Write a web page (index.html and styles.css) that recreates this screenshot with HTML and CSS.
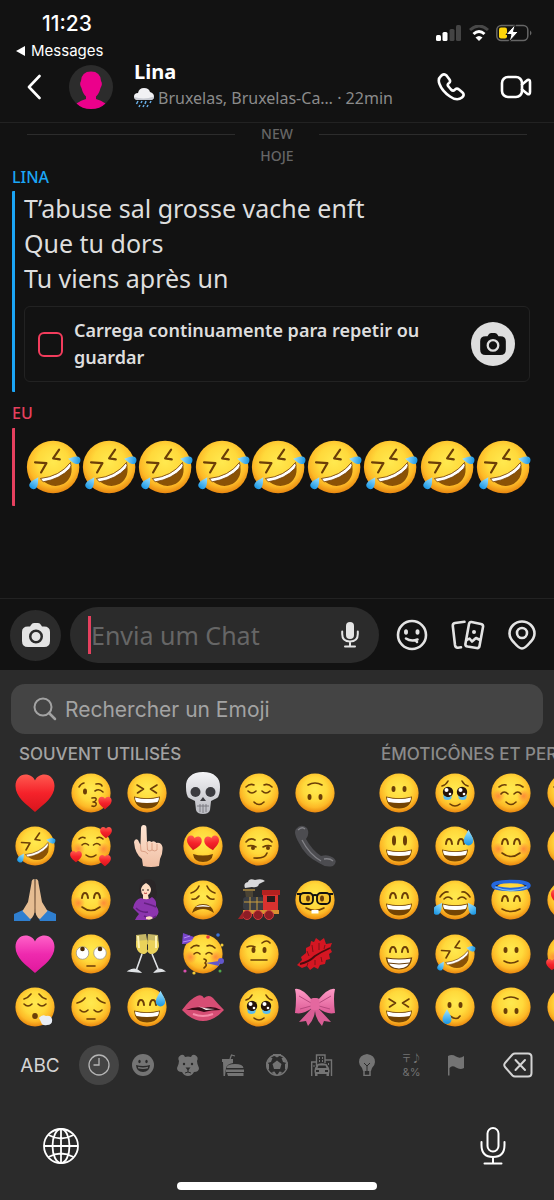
FILE: index.html
```
<!DOCTYPE html><html lang="pt"><head><meta charset="utf-8"><meta name="viewport" content="width=device-width"><link rel="icon" href="data:">
<title>Lina</title>
<link rel="stylesheet" href="styles.css">
</head>
<body>

<svg class="sprite" aria-hidden="true">
<defs>
  <radialGradient id="gface" cx=".5" cy=".4" r=".6"><stop offset="0" stop-color="#ffe94f"/><stop offset=".5" stop-color="#ffd93b"/><stop offset=".78" stop-color="#fdb927"/><stop offset="1" stop-color="#e8860f"/></radialGradient>
  <linearGradient id="gred" x2="0" y2="1"><stop offset="0" stop-color="#ff5a50"/><stop offset=".5" stop-color="#f5222a"/><stop offset="1" stop-color="#d8141c"/></linearGradient>
  <linearGradient id="gpink" x2="0" y2="1"><stop offset="0" stop-color="#ff62c8"/><stop offset=".5" stop-color="#ee2aae"/><stop offset="1" stop-color="#e0189c"/></linearGradient>
  <linearGradient id="gtear" x2="0" y2="1"><stop offset="0" stop-color="#a5e6ff"/><stop offset="1" stop-color="#1795e4"/></linearGradient>
  <linearGradient id="gskull" x2="0" y2="1"><stop offset="0" stop-color="#f4f4f6"/><stop offset="1" stop-color="#b9bac0"/></linearGradient>
  <linearGradient id="gskin" x2="0" y2="1"><stop offset="0" stop-color="#ffe6d4"/><stop offset="1" stop-color="#f0bfa4"/></linearGradient>
  <linearGradient id="gbow" x2="0" y2="1"><stop offset="0" stop-color="#ff9ac6"/><stop offset="1" stop-color="#dc5a95"/></linearGradient>
  <radialGradient id="gcheek"><stop offset="0" stop-color="#ff6a3a" stop-opacity=".65"/><stop offset="1" stop-color="#ff6a3a" stop-opacity="0"/></radialGradient>

  <circle id="p-face" r="19.6" fill="url(#gface)"/>
  <path id="p-heart" d="M0 19C-9 11-19.500 4-19.500-7C-19.500-14-15-18.500-9.500-18.500C-5-18.500-1.500-16 0-12.500C1.500-16 5-18.500 9.500-18.500C15-18.500 19.500-14 19.500-7C19.500 4 9 11 0 19Z"/>
  <path id="p-tear" d="M0-7C2-3 4.500 0 4.500 3.500A4.500 4.500 0 0 1-4.500 3.500C-4.500 0-2-3 0-7Z" fill="url(#gtear)"/>
  <g id="p-mouth"><path d="M-13 3.500Q0 7 13 3.500Q12 15.500 0 15.500Q-12 15.500-13 3.500Z" fill="#734404"/><path d="M-12 4.500Q0 7.500 12 4.500Q12 8 10.500 9Q0 11-10.500 9Q-12 8-12 4.500Z" fill="#fff"/></g>
  <g id="p-arcs" class="ln thick"><path d="M-9-2Q-8.500-7-6-7T-3-2M3-2Q3.500-7 6-7T9-2"/></g>
  <g id="p-dots" fill="#6b3e07"><ellipse cx="-5.500" cy="-4" rx="2" ry="3"/><ellipse cx="5.500" cy="-4" rx="2" ry="3"/></g>
  <g id="p-cheeks"><circle cx="-12.500" cy="3" r="6.500" fill="url(#gcheek)"/><circle cx="12.500" cy="3" r="6.500" fill="url(#gcheek)"/></g>
  <g id="p-closed" class="ln"><path d="M-11-1Q-7 3-3-1M3-1Q7 3 11-1"/></g>
  <g id="p-puppy"><g fill="#23130a"><circle cx="-7" cy="-1" r="5.200"/><circle cx="7" cy="-1" r="5.200"/></g><g fill="#fff"><circle cx="-8.500" cy="-3" r="2"/><circle cx="5.500" cy="-3" r="2"/><circle cx="-5" cy="1" r="1.300"/><circle cx="9" cy="1" r="1.300"/></g><path d="M-12 2Q-7 6-3 2.500L-4 6Q-8 8-11 6ZM12 2Q7 6 3 2.500L4 6Q8 8 11 6Z" fill="#5bbcf0"/></g>
</defs>

<symbol id="heart" viewBox="-21 -21 42 42"><use href="#p-heart" fill="url(#gred)"/></symbol>
<symbol id="pinkheart" viewBox="-21 -21 42 42"><use href="#p-heart" fill="url(#gpink)"/></symbol>
<symbol id="kiss" viewBox="-21 -21 42 42"><use href="#p-face"/><ellipse cx="-6" cy="-1.500" rx="2" ry="3" fill="#6b3e07"/><path class="ln" d="M-12-6Q-10-9.500-7-10M5-9Q10-10 11-7M4-2Q8-5 12-1M1 5Q6 4 5 7Q4 9 2 9Q6 9 5 12Q4 14 1 13"/><use href="#p-heart" fill="url(#gred)" transform="translate(14 10) scale(.34)"/></symbol>
<symbol id="laugh" viewBox="-21 -21 42 42"><use href="#p-face"/><path class="ln" d="M-10-8L-3.500-4L-9.500 0M10-8L3.500-4L9.500 0"/><use href="#p-mouth"/></symbol>
<symbol id="rofl" viewBox="-21 -21 42 42"><use href="#p-face"/><path class="ln" d="M4.500-13L0-6.500L5-5.800M-13.500-3.500L-5-3L-9 4"/><path d="M-9.500 8.500Q5 7 13-3.500Q16 7 8 12.500Q-1 17-9.500 8.500Z" fill="#8a5206"/><path d="M-9.500 8.500Q5 7 13-3.500Q14-1 12.500 1Q5 9-7.500 11Z" fill="#fff" stroke="#754207" stroke-width=".6"/><use href="#p-tear" transform="translate(15.500 -5.500) rotate(-80) scale(.62)"/><use href="#p-tear" transform="translate(-13.500 11.500) rotate(32) scale(.66)"/></symbol>
<symbol id="loved" viewBox="-21 -21 42 42"><use href="#p-face"/><use href="#p-cheeks"/><path class="ln" d="M-9-1Q-6-4-2.500-1M2.500-1Q6-4 9-1M-12-7Q-9-10-6-8M6-8Q9-10 12-7M-5 9Q0 13 5 9"/><g fill="url(#gred)"><use href="#p-heart" transform="translate(15 -13.500) scale(.3)"/><use href="#p-heart" transform="translate(-15 10.500) scale(.3)"/><use href="#p-heart" transform="translate(14 14.500) scale(.3)"/></g></symbol>
<symbol id="finger" viewBox="-21 -21 42 42"><path d="M-6-17.500Q-6-21-3.200-21T-.5-17.500L0-4Q2-6 4.500-4Q7-6 9.500-3Q14-4 15.500 1Q16 8 13 13L12 20Q4 22-4 20L-5 13Q-12 8-13-4Q-12-8-9-6L-6.500-1Z" fill="url(#gskin)"/><path d="M0-4L.5 4Q3 6 5 4V-3M5 4Q8 6 10 4V-2M-6.500-1L-6 5Q-1 5 1 8" fill="none" stroke="#d79b80" stroke-width=".9"/></symbol>
<symbol id="pray" viewBox="-21 -21 42 42"><path d="M-21 14L-12 10L-3 17L-5 21H-21ZM21 14L12 10L3 17L5 21H21Z" fill="#2f7fd0"/><path d="M-.5-21Q-3.500-21-3.500-17L-7 2L-12.500 11L-5 19Q0 17-.3 8ZM.5-21Q3.500-21 3.500-17L7 2L12.500 11L5 19Q0 17 .3 8Z" fill="#e6bd92"/><path d="M0-19V13" stroke="#a87850" stroke-width=".9"/></symbol>
<symbol id="blush" viewBox="-21 -21 42 42"><use href="#p-face"/><use href="#p-cheeks"/><use href="#p-arcs"/><path class="ln" d="M-9 7Q0 14 9 7"/></symbol>
<symbol id="pregnant" viewBox="-21 -21 42 42"><path d="M-8-11Q-7-21 1-21Q10-20 9-11Q11-6 8-1L-3 0Q-8-5-8-11Z" fill="#2a2627"/><path d="M-6-11Q-5-15-1-17Q3-15 4-11Q4-7 1-5L2 0H-4V-5Q-6-7-6-11Z" fill="#ffdcc2"/><path d="M-6-2Q1 1 5-3Q10 0 9 6Q14 12 9 17Q4 20 1 18L0 20H-12Q-10 16-8 14L-14 8Q-12-1-6-2Z" fill="#8c35ae"/><path d="M-11 8Q-6 13 1 12M-3 16Q5 20 9 16M-3 3Q5 5 9 7" fill="none" stroke="#63207f" stroke-width="1.500"/><path d="M-1 17Q4 15 6 18Q3 21-1 19Z" fill="#ffdcc2"/><circle cx="-4" cy="-10" r=".8"/><circle cx="1" cy="-10" r=".8"/><path d="M-3-7Q-1-6 0-7" stroke="#b33" fill="none"/></symbol>
<symbol id="rolling" viewBox="-21 -21 42 42"><use href="#p-face"/><g fill="#fff" stroke="#8f8984" stroke-width=".7"><circle cx="-8.500" cy="-1" r="6.300"/><circle cx="9" cy="-1" r="6.300"/></g><circle cx="-8.500" cy="-5" r="2.300" fill="#4a2a05"/><circle cx="9" cy="-5" r="2.300" fill="#4a2a05"/><path class="ln" d="M-4 12H4"/></symbol>
<symbol id="champagne" viewBox="-21 -21 42 42"><path d="M-11-19L-1-20L1-9Q2-1-3 0Q-9 0-11-8ZM11-19L1-20L0-9Q-1-1 4 0Q10 0 12-8Z" fill="#c7b866"/><path d="M-11-13L0-14L1-9Q2-1-3 0Q-9 0-11-8ZM11-13L2-14L0-9Q-1-1 4 0Q10 0 12-8Z" fill="#ead25a"/><path d="M-9-18L-8-6M9-18V-6" stroke="#fff5b5" stroke-width="2"/><path d="M-5 0L-11 17M5 0L12 17M-18 17Q-12 13-7 18ZM8 18Q12 13 17 17Z" fill="#e4e6e8" stroke="#dfe2e5" stroke-width="1.600"/></symbol>
<symbol id="exhale" viewBox="-21 -21 42 42"><use href="#p-face"/><use href="#p-closed" y="-2"/><path class="ln" d="M-11-8Q-7-9-4-13M4-13Q7-9 11-8"/><ellipse cy="9" rx="2.800" ry="3" fill="#6b3e07"/><path d="M4 11Q7 7 11 9Q16 8 17 12Q18 18 12 18Q7 19 6 15Z" fill="#e9eef5"/></symbol>
<symbol id="pensive" viewBox="-21 -21 42 42"><use href="#p-face"/><use href="#p-closed" y="4"/><path class="ln" d="M-14-4Q-9-5-6-9M6-9Q9-5 14-4M-4 12H4"/></symbol>
<symbol id="sweat" viewBox="-21 -21 42 42"><use href="#p-face"/><use href="#p-arcs"/><use href="#p-mouth"/><use href="#p-tear" transform="translate(13.500 -9) scale(1.050)"/></symbol>
<symbol id="skull" viewBox="-21 -21 42 42"><path d="M0-21C11-21 17.500-15 17-6Q17 3 14 5L8 8L7 17Q6 21 0 21T-7 17L-8 8L-14 5Q-17 3-17-6C-17.500-15-11-21 0-21Z" fill="url(#gskull)"/><g fill="#3b3b3f"><ellipse cx="-7.500" cy="-1" rx="5" ry="5"/><ellipse cx="7.500" cy="-1" rx="5" ry="5"/><path d="M0 4L3 8H-3Z"/></g><path d="M-6 13H6M-3 11V19M0 11V20M3 11V19" stroke="#77777d" stroke-width=".9"/></symbol>
<symbol id="relieved" viewBox="-21 -21 42 42"><use href="#p-face"/><use href="#p-closed" y="-1"/><path class="ln" d="M-13-6Q-9-10-5-8M5-8Q9-10 13-6M-5 9Q0 14 5 9"/></symbol>
<symbol id="upside" viewBox="-21 -21 42 42"><use href="#p-face"/><g transform="rotate(180)"><use href="#p-dots"/><path class="ln" d="M-7 8Q0 12 7 8"/></g></symbol>
<symbol id="hearteyes" viewBox="-21 -21 42 42"><use href="#p-face"/><path d="M-10 8Q0 11 10 8Q9 16 0 16T-10 8Z" fill="#734404"/><g fill="url(#gred)"><use href="#p-heart" transform="translate(-9 -3) rotate(8) scale(.38)"/><use href="#p-heart" transform="translate(9 -3) rotate(-8) scale(.38)"/></g></symbol>
<symbol id="smirk" viewBox="-21 -21 42 42"><use href="#p-face"/><path class="ln" d="M-13-4Q-9-9-4-6M4-6Q9-9 13-4M-11 0Q-7-1-3 1M4 1Q8-1 12 0M-5 12Q6 13 8 7"/><circle cx="-6" cy="2" r="2" fill="#6b3e07"/><circle cx="9" cy="2" r="2" fill="#6b3e07"/></symbol>
<symbol id="phone" viewBox="-21 -21 42 42"><path d="M-19-17Q-14-23-8-18Q-5-12-9-7Q-3 4 6 10Q12 8 17 11Q24 15 18 20Q11 22 4 17Q-10 10-16-3Q-22-13-19-17Z" fill="#4c4c50"/><path d="M-17-16Q-13-20-10-17M-13-6Q-6 8 6 15M9 13Q15 12 18 15" fill="none" stroke="#828287" stroke-width="1.300"/></symbol>
<symbol id="weary" viewBox="-21 -21 42 42"><use href="#p-face"/><path class="ln" d="M-12-7Q-6-9-4-14M4-14Q6-9 12-7M-11-1Q-7 0-4-4M4-4Q7 0 11-1"/><path d="M-11 13Q-9 4 0 4T11 13Q5 9 0 9T-11 13Z" fill="#734404"/><path d="M-8 7Q0 3 8 7Q0 6-8 7" fill="#fff"/></symbol>
<symbol id="train" viewBox="-21 -21 42 42"><path d="M-14-12Q-16-17-11-18Q-10-22-4-20Q3-22 6-19L0-16Q-1-12-7-13Z" fill="#d9d9db"/><path d="M-14-9H-6V-2H-13Z" fill="#4b4434"/><path d="M-16-10H-4" stroke="#b18e44" stroke-width="1.500"/><rect x="-16" y="-3" width="21" height="13" rx="3" fill="#3a3d42"/><path d="M-15 2H4M-9-3V10M-2-3V10" stroke="#c99e3f"/><path d="M4-8H19V12H4Z" fill="#d8322f"/><path d="M3-10H21V-5H3Z" fill="#b4211f"/><rect x="8" y="-4" width="8" height="6" fill="#291a19"/><path d="M-16 10H20V14H-16Z" fill="#d89131"/><g fill="#8e1d25" stroke="#cf3b3e"><circle cx="-12" cy="15" r="4.500"/><circle cx="-1" cy="15" r="4.500"/><circle cx="10" cy="15" r="4.500"/></g><path d="M-21 19L-16 12V19Z" fill="#a12328"/></symbol>
<symbol id="nerd" viewBox="-21 -21 42 42"><use href="#p-face"/><g fill="#f6c430" stroke="#111" stroke-width="1.800"><rect x="-15" y="-7" width="13" height="11" rx="4"/><rect x="2" y="-7" width="13" height="11" rx="4"/></g><path d="M-18-6H-14M14-6H18M-3-4Q0-6 3-4" fill="none" stroke="#111" stroke-width="1.800"/><ellipse cx="-7" cy="-1.500" rx="2" ry="3" fill="#6b3e07"/><ellipse cx="7" cy="-1.500" rx="2" ry="3" fill="#6b3e07"/><path class="ln" d="M-9 8Q0 13 9 8"/><path d="M-3.500 10H3.500V13.500H-3.500Z" fill="#fff"/></symbol>
<symbol id="party" viewBox="-21 -21 42 42"><use href="#p-face"/><use href="#p-cheeks"/><path d="M-20-21L-9-17Q-13-9-21-10Z" fill="#7645c9"/><path d="M-19-16L-13-18M-20-12L-11-14" stroke="#b58af2"/><path class="ln" d="M-9 0Q-6-3-3 0M3 0Q6-3 9 0M-12-6Q-8-10-4-8M4-8Q8-10 12-6M1 5Q5 6 2 9Q5 11 1 14"/><path d="M3 9L16 7V12Z" fill="#6257cb"/><circle cx="18" cy="7" r="3" fill="#6257cb"/><g><circle cx="5" cy="-17" r="1.800" fill="#e33a3f"/><circle cx="15" cy="-19" r="1.800" fill="#3971d8"/><circle cx="19" cy="-9" r="1.500" fill="#f2ca37"/><circle cx="-18" cy="17" r="1.600" fill="#d94fae"/><circle cx="-9" cy="19" r="1.600" fill="#f2ca37"/><circle cx="17" cy="17" r="1.500" fill="#51a94c"/></g></symbol>
<symbol id="brow" viewBox="-21 -21 42 42"><use href="#p-face"/><use href="#p-dots"/><path class="ln" d="M-12-7Q-8-9-4-7M3-11Q8-15 11-11M-8 6H8"/></symbol>
<symbol id="kissmark" viewBox="-21 -21 42 42"><path d="M-18 11L-13 6L-14 3L-9-1L-9-6L-5-8L-4-13L-1-12L1-16L5-13L9-16L11-10L17-11L15-6L17-2L14 0L15 5L11 6L10 10L5 11L3 15L-1 13L-5 16L-8 12L-13 14Z" fill="#d51622"/><path d="M-15 10Q-6 8 0 2Q6-2 15-6" fill="none" stroke="#4a0c0f" stroke-width="1.800"/><path d="M-8-3L-6 2M-3-9L-2-2M4-11L4-4M10-9L9-5M-8 12L-7 9M0 11V6M7 8L6 3" fill="none" stroke="#7d1216"/></symbol>
<symbol id="lips" viewBox="-21 -21 42 42"><path d="M-21 3Q-12-9-6-11Q-1-13 1-9Q6-13 10-9Q15-3 21 3Q11 14 0 14T-21 3Z" fill="#d64d74"/><path d="M-17 3Q-8-1 1 1Q10-2 18 3Q8 3 1 5Q-8 2-17 3Z" fill="#350c17"/><path d="M-5-1Q1 2 12 2L3 3Z" fill="#fff"/><path d="M-10 7Q0 11 10 7" stroke="#f58ba8" stroke-width="2" fill="none"/></symbol>
<symbol id="puppy" viewBox="-21 -21 42 42"><use href="#p-face"/><use href="#p-puppy"/><path class="ln" d="M-13-7Q-9-8-7-12M7-12Q9-8 13-7M-5 11Q0 15 5 11"/></symbol>
<symbol id="bow" viewBox="-21 -21 42 42"><path d="M-4 2L-16 15L-9 14L-7 19Q-1 13 0 4Q1 13 7 19L9 14L16 15L4 2Z" fill="#d95d95"/><path d="M-3-7Q-14-20-20-18Q-18-10-20 6Q-12 8-3 1ZM3-7Q14-20 20-18Q18-10 20 6Q12 8 3 1Z" fill="url(#gbow)"/><path d="M-4-4L-16-11M-4-1L-15 2M4-4L16-11M4-1L15 2" stroke="#b8497e"/><rect x="-4.500" y="-9" width="9" height="12" rx="3" fill="#e4689f"/></symbol>
<symbol id="grin" viewBox="-21 -21 42 42"><use href="#p-face"/><use href="#p-dots"/><use href="#p-mouth"/></symbol>
<symbol id="bigeyes" viewBox="-21 -21 42 42"><use href="#p-face"/><ellipse cx="-5" cy="-5.500" rx="2" ry="5" fill="#6b3e07"/><ellipse cx="6" cy="-5.500" rx="2" ry="5" fill="#6b3e07"/><use href="#p-mouth"/></symbol>
<symbol id="smile" viewBox="-21 -21 42 42"><use href="#p-face"/><use href="#p-arcs"/><use href="#p-mouth"/></symbol>
<symbol id="beam" viewBox="-21 -21 42 42"><use href="#p-face"/><use href="#p-arcs"/><path d="M-12.500 4Q0 6 12.500 4Q11 15 0 15T-12.500 4Z" fill="#fff" stroke="#6b3e07" stroke-width="1.200"/><path d="M-11 9Q0 11 11 9" fill="none" stroke="#6b3e07"/></symbol>
<symbol id="relaxed" viewBox="-21 -21 42 42"><use href="#p-face"/><use href="#p-cheeks"/><path class="ln" d="M-10 1Q-7-3-3 1M3 1Q7-3 10 1M-12-6Q-8-9-5-8M5-8Q8-9 12-6M-5 9Q0 14 5 9"/></symbol>
<symbol id="joy" viewBox="-21 -21 42 42"><use href="#p-face"/><use href="#p-mouth"/><path class="ln" d="M-11-1Q-7-5-3-1M3-1Q7-5 11-1M-15-3Q-11-9-7-8M7-8Q11-9 15-3"/><use href="#p-tear" transform="translate(-16.500 8) rotate(35) scale(.9)"/><use href="#p-tear" transform="translate(16.500 8) rotate(-35) scale(.9)"/></symbol>
<symbol id="halo" viewBox="-21 -21 42 42"><use href="#p-face"/><use href="#p-arcs" y="3"/><path class="ln" d="M-9 9Q0 14 9 9"/><ellipse cy="-14.500" rx="18" ry="4" fill="none" stroke="#2468df" stroke-width="3.500"/><path d="M-16-13Q0-6 16-13" fill="none" stroke="#75b9f2" stroke-width="1.300"/></symbol>
<symbol id="slight" viewBox="-21 -21 42 42"><use href="#p-face"/><use href="#p-dots"/><path class="ln" d="M-7 7Q0 11 7 7"/></symbol>
<symbol id="tearsmile" viewBox="-21 -21 42 42"><use href="#p-face"/><use href="#p-dots" y="2"/><path class="ln" d="M-5 9Q2 14 5 9"/><use href="#p-tear" transform="translate(-8 9)"/></symbol>

<symbol id="camera" viewBox="0 0 28 24"><path fill-rule="evenodd" d="M9 2Q10 0 12 0H16Q18 0 19 2L20 3.500H22Q28 3.500 28 9V18Q28 24 22 24H6Q0 24 0 18V9Q0 3.500 6 3.500H8ZM14 6.500A7 7 0 1 0 14 20.500A7 7 0 1 0 14 6.500ZM14 9A4.500 4.500 0 1 1 14 18A4.500 4.500 0 1 1 14 9Z" fill="currentColor"/></symbol>
</svg>

<header class="top">
  <div class="status">
    <div class="clock">
      <time>11:23</time>
      <a href="#messages"><svg width="9" height="10" viewBox="0 0 9 10" aria-hidden="true"><path d="M9 0V10L0 5Z" fill="#fff"/></svg>Messages</a>
    </div>
    <div class="signals">
      <svg width="26" height="16" viewBox="0 0 26 16" role="img" aria-label="Rede"><rect y="10" width="5" height="6" rx="1.500" fill="#fff"/><rect x="6.500" y="7" width="5" height="9" rx="1.500" fill="#fff"/><rect x="13.500" y="4" width="5" height="12" rx="1.500" fill="#444"/><rect x="20" width="5" height="16" rx="1.500" fill="#444"/></svg>
      <svg width="20" height="16" viewBox="0 0 20 16" role="img" aria-label="Wi-Fi" fill="none" stroke-width="3"><path d="M1 5Q10-3 19 5" stroke="#484848"/><path d="M4.500 9Q10 4 15.500 9" stroke="#fff"/><path d="M10 16L6.500 12.500Q10 9.500 13.500 12.500Z" fill="#fff"/></svg>
      <svg width="36" height="18" viewBox="0 0 36 18" role="img" aria-label="Bateria"><rect x=".8" y="1.500" width="31" height="15" rx="4.500" fill="none" stroke="#666" stroke-width="1.500"/><path d="M34 6.500Q37 9 34 11.500Z" fill="#666"/><rect x="3" y="3.500" width="8" height="11" rx="2" fill="#ffd60a"/><path d="M19.500 0L10 10.500H15L13 18L22.500 7.500H17.500Z" fill="#fff" stroke="#121212" stroke-width="1"/></svg>
    </div>
  </div>
  <div class="contact">
    <button class="back" aria-label="Voltar"><svg width="14" height="26" viewBox="0 0 14 26"><path class="wl" d="M12.500 2L2 13L12.500 24"/></svg></button>
    <svg class="avatar" viewBox="0 0 44 44" role="img" aria-label="Lina"><circle cx="22" cy="22" r="22" fill="#2c2c2c"/><path d="M22 6.500Q31.500 6.500 32 16Q34 19 31.500 23Q30 29 27 31.500V34Q32 35 36.500 38.500Q31 44 22 44T7.500 38.500Q12 35 17 34V31.500Q14 29 12.500 23Q10 19 12 16Q12.500 6.500 22 6.500Z" fill="#eb008b"/></svg>
    <div class="who">
      <h1>Lina</h1>
      <p><svg width="20" height="20" viewBox="0 0 20 20" role="img" aria-label="Chuva"><path d="M4 12Q0 12 0 8.500T4 5Q5 0 10 0T16 4Q20 5 20 8.500T16 12Z" fill="#f1f1f4"/><path d="M0 9Q1 12 4 12H16Q20 12 20 8.500Q10 12 0 9" fill="#c7cad2"/><path d="M4 13L2.500 16M8 13L7 15M12 13L11 16M17 13L16 15M6 17L5 19M10 17L9 19M14 17L13 19" stroke="#67aee6" stroke-width="1.500"/></svg><span>Bruxelas, Bruxelas-Ca… · 22min</span></p>
    </div>
    <button aria-label="Ligar"><svg width="28" height="28" viewBox="0 0 28 28"><path class="wl" d="M4 3Q7 0 9.500 2.500L12.500 6.500Q14 9 11.500 10.500Q10 12 11.500 13.500L14 16.500Q16 18.500 17.500 17Q19.500 14.500 22 16.500L25.500 19.500Q28 22 25 24.500Q20 28.500 13 23.500Q5 18 2.500 11Q.5 6 4 3Z"/></svg></button>
    <button aria-label="Videochamada"><svg width="32" height="24" viewBox="0 0 32 24"><g class="wl"><rect x="2" y="2" width="20" height="20" rx="6"/><path d="M22 9.500L27.500 5Q30 4 30 7V17Q30 20 27.500 19L22 14.500"/></g></svg></button>
  </div>
</header>

<main>
  <div class="new"><span>NEW</span></div>
  <div class="day">HOJE</div>
  <h2 class="lina">LINA</h2>
  <div class="msgs lina">
    <p>T’abuse sal grosse vache enft</p>
    <p>Que tu dors</p>
    <p>Tu viens après un</p>
    <div class="snap">
      <i></i>
      <span>Carrega continuamente para repetir ou guardar</span>
      <button aria-label="Responder com Snap"><svg width="26" height="22"><use href="#camera"/></svg></button>
    </div>
  </div>
  <h2 class="eu">EU</h2>
  <div class="msgs eu" id="lol"></div>
</main>

<form class="composer">
  <button type="button" class="cam" aria-label="Câmara"><svg width="28" height="24"><use href="#camera"/></svg></button>
  <div class="field">
    <i class="caret"></i>
    <input type="text" placeholder="Envia um Chat" aria-label="Envia um Chat">
    <button type="button" aria-label="Nota de voz"><svg width="18" height="26" viewBox="0 0 18 26"><rect x="5" width="8" height="17" rx="4" fill="#e4e4e4"/><path d="M1.200 9.500V12Q1.200 19.500 9 19.500T16.800 12V9.500M9 20V24M4 24.500H14" fill="none" stroke="#e4e4e4" stroke-width="2" stroke-linecap="round"/></svg></button>
  </div>
  <button type="button" aria-label="Autocolantes"><svg width="32" height="32" viewBox="0 0 32 32"><circle class="gl" cx="16" cy="16" r="14"/><ellipse cx="10" cy="13" rx="2" ry="2.800" fill="#e4e4e4"/><ellipse cx="21.500" cy="13" rx="2" ry="2.800" fill="#e4e4e4"/><path class="gl" d="M10 19.500Q15 23 21.500 20.500M19.500 21L21 23"/></svg></button>
  <button type="button" aria-label="Memórias"><svg width="34" height="30" viewBox="0 0 34 30"><path class="gl" d="M13.500 1.800L4 3Q1.500 3.500 1.800 6L4 25Q4.500 28 7 27.700L10 27.300"/><path class="gl" d="M20.500 2L30 4Q32.500 4.500 32 7L28.500 26Q28 28.500 25.500 28L16.500 26.500Q14 26 14.500 23.500L18 4Q18.500 1.700 20.500 2ZM16 20L18.500 18.500L21 21.500L25 18L29 20"/><circle cx="23" cy="12" r="2" fill="#e4e4e4"/></svg></button>
  <button type="button" aria-label="Localização"><svg width="28" height="30" viewBox="0 0 28 30"><path class="gl" d="M14 28.500Q11 28.500 6 22.500Q1.500 18 1.500 13.500A12.500 12 0 0 1 26.500 13.500Q26.500 18 22 22.500Q17 28.500 14 28.500Z"/><circle class="gl" cx="14" cy="13" r="5"/></svg></button>
</form>

<section class="keyboard">
  <label class="search"><svg width="24" height="24" viewBox="0 0 24 24" aria-hidden="true"><g fill="none" stroke="#a3a3a3" stroke-width="2" stroke-linecap="round"><circle cx="10" cy="10" r="8.500"/><path d="M16 16L22 22" stroke-width="2.500"/></g></svg><input type="search" placeholder="Rechercher un Emoji" aria-label="Rechercher un Emoji"></label>
  <div class="pages">
    <section><h3>SOUVENT UTILISÉS</h3><div class="grid" id="used"></div></section>
    <section class="faces"><h3>ÉMOTICÔNES ET PERSONNES</h3><div class="grid" id="smileys"></div></section>
  </div>
  <nav class="tabs">
    <button class="abc">ABC</button>
    <button class="on" aria-label="Récents"><svg viewBox="0 0 22 22"><g fill="none" stroke="#b5b5b5" stroke-width="1.300"><circle cx="11" cy="11" r="10"/><path d="M11 4V11H5.500"/></g></svg></button>
    <button aria-label="Émoticônes"><svg viewBox="0 0 22 22"><circle cx="11" cy="11" r="11"/><g fill="#2b2b2b"><ellipse cx="7.500" cy="7.500" rx="1.200" ry="1.800"/><ellipse cx="14.500" cy="7.500" rx="1.200" ry="1.800"/><path d="M4 11Q11 13 18 11Q17.500 18 11 18T4 11Z"/></g><path d="M6 13.500Q11 15 16 13.500" stroke="#747474" stroke-width="1.500" fill="none"/></svg></button>
    <button aria-label="Animaux"><svg viewBox="0 0 22 22"><path d="M4 1Q7 0 8 3Q11 2 14 3Q15 0 18 1Q22 3 20 7Q20 10 22 14Q22 18 17 18Q15 22 11 22T5 18Q0 18 0 14Q2 10 2 7Q0 3 4 1Z"/><g fill="#2b2b2b"><circle cx="7" cy="10" r="1.200"/><circle cx="15" cy="10" r="1.200"/><path d="M8.500 13.500H13.500L11 16.500Z"/></g><path d="M11 15V18M8 19Q11 17 14 19" fill="none" stroke="#2b2b2b"/></svg></button>
    <button aria-label="Nourriture"><svg viewBox="0 0 22 22"><path d="M0 5H11V9Q5 10 4 14L3 22H1.500L1 8H0ZM4.500 14Q5 10 13 10T21.500 14ZM4 15.500H22V18H4ZM5 19H21.500V22H6Z"/><path d="M8 5L9.500 1L13 2" fill="none" stroke="#747474" stroke-width="1.300"/></svg></button>
    <button aria-label="Activités"><svg viewBox="0 0 22 22"><circle cx="11" cy="11" r="10.300" fill="none" stroke="#747474" stroke-width="1.400"/><path d="M11 6.500L15.500 10L14 15H8L6.500 10ZM7 1L11 3.500L15 1V0H7ZM0 8L3 10L3 15L1 16ZM22 8L19 10V15L21 16ZM6 18L8.500 17.500L11 21.500L8 21ZM16 18L13.500 17.500L11 21.500L14 21ZM3 4L6.500 4L5 8L1.500 9ZM19 4H15.500L17 8L20.500 9Z"/></svg></button>
    <button aria-label="Voyages"><svg viewBox="0 0 22 22"><path d="M.7 22V8H5.500V1H14V6H20.500V22M5.500 8V12M14 6V9" fill="none" stroke="#747474" stroke-width="1.400"/><path d="M4 14L6.500 10Q11 8.500 15.500 10L18 14Q19 16 18 20V22H15.500V20H6.500V22H4V20Q3 16 4 14ZM7.500 11.500L6.500 14H15.500L14.500 11.500ZM5 16V18H8V16ZM14 16V18H17V16Z" fill-rule="evenodd"/><path d="M8 3H9V5H8ZM11 3H12V5H11ZM8 6H9V8H8ZM11 6H12V8H11ZM2.500 11H3.500V13H2.500ZM17 9H18V11H17Z"/></svg></button>
    <button aria-label="Objets"><svg viewBox="0 0 22 22"><path d="M11 0Q19 1 19 8Q19 11 16 14L15 17H7L6 14Q3 11 3 8Q3 1 11 0Z"/><path d="M8 9L11 12L14 9M11 12V17" fill="none" stroke="#2b2b2b"/><path d="M8 17V21.500H14V17" fill="none" stroke="#747474" stroke-width="1.500"/></svg></button>
    <button aria-label="Symboles" class="sym"><span class="jp">〒♪</span><span>&amp;%</span></button>
    <button aria-label="Drapeaux"><svg viewBox="0 0 22 22"><path d="M3 2Q7 0 11 2.500T19 2V14Q15 16 11 13.500T4.500 14V21.500H3Z"/></svg></button>
    <button class="del" aria-label="Supprimer"><svg viewBox="0 0 30 26"><g fill="none" stroke="#d4d4d4" stroke-width="2" stroke-linecap="round" stroke-linejoin="round"><path d="M12 1.500H25Q28.500 1.500 28.500 5V21Q28.500 24.500 25 24.500H12Q10.500 24.500 9.500 23.500L2 15Q.5 13 2 11L9.500 2.500Q10.500 1.500 12 1.500Z"/><path d="M12.500 8L22 18M22 8L12.500 18"/></g></svg></button>
  </nav>
  <div class="bottom">
    <button aria-label="Clavier suivant"><svg width="36" height="36" viewBox="0 0 36 36"><g fill="none" stroke="#fff" stroke-width="1.800"><circle cx="18" cy="18" r="17"/><ellipse cx="18" cy="18" rx="8.500" ry="17"/><path d="M18 1V35M1 18H35M5.500 7Q18 14 30.500 7M5.500 29Q18 22 30.500 29"/></g></svg></button>
    <button aria-label="Dictée"><svg width="26" height="38" viewBox="0 0 26 38"><g fill="none" stroke="#fff" stroke-width="2" stroke-linecap="round"><rect x="7.500" y="1" width="11" height="23.500" rx="5.500"/><path d="M1.500 15V18Q1.500 30 13 30T24.500 18V15M13 30V36M4.500 36.500H21.500"/></g></svg></button>
  </div>
  <div class="home"></div>
</section>

<script>
const used = [
  "heart", "kiss", "laugh", "skull", "relieved", "upside",
  "rofl", "loved", "finger", "hearteyes", "smirk", "phone",
  "pray", "blush", "pregnant", "weary", "train", "nerd",
  "pinkheart", "rolling", "champagne", "party", "brow", "kissmark",
  "exhale", "pensive", "sweat", "lips", "puppy", "bow",
];
const smileys = [
  "grin", "puppy", "relaxed", "relieved",
  "bigeyes", "sweat", "blush", "slight",
  "smile", "joy", "halo", "hearteyes",
  "beam", "rofl", "slight", "loved",
  "laugh", "tearsmile", "upside", "slight",
];
const emoji = (name) => `<svg class="emoji" viewBox="-21 -21 42 42"><use href="#${name}" x="-21" y="-21" width="42" height="42"/></svg>`;
const key = (name) => `<button aria-label="${name}">${emoji(name)}</button>`;

document.getElementById("used").innerHTML = used.map(key).join("");
document.getElementById("smileys").innerHTML = smileys.map(key).join("");
document.getElementById("lol").innerHTML = emoji("rofl").repeat(9);
</script>
</body>
</html>
```
FILE: styles.css
```
:root {
  --bg: #121212;
  --panel: #2b2b2b;
  --blue: #1ba5f5;
  --red: #e5405e;
}
* {
  box-sizing: border-box;
}
body {
  margin: 0;
  min-height: 100vh;
  display: flex;
  flex-direction: column;
  background: var(--bg);
  color: #dedede;
  font-family: "Noto Sans", "Open Sans", sans-serif;
  overflow-x: hidden;
}
h1, h2, h3, p {
  margin: 0;
}
button {
  display: flex;
  flex: none;
  align-items: center;
  justify-content: center;
  padding: 0;
  border: 0;
  background: none;
  color: inherit;
  font: inherit;
  cursor: pointer;
}
input {
  flex: 1;
  min-width: 0;
  padding: 0;
  border: 0;
  outline: 0;
  background: none;
  color: #fff;
  font: inherit;
}
svg {
  display: block;
  flex: none;
}
.sprite {
  position: absolute;
  width: 0;
  height: 0;
}
.ln, .wl, .gl {
  fill: none;
  stroke-linecap: round;
  stroke-linejoin: round;
}
.ln {
  stroke: #6b3e07;
  stroke-width: 1.6;
}
.thick {
  stroke-width: 2;
}
.wl {
  stroke: #fff;
  stroke-width: 2.6;
}
.gl {
  stroke: #e4e4e4;
  stroke-width: 2.6;
}

/* header */
.top {
  border-bottom: 1px solid #222;
}
.status {
  display: flex;
  justify-content: space-between;
  height: 62px;
  padding: 12px 22px 0 16px;
  color: #fff;
  font-family: Inter, sans-serif;
}
.clock time {
  display: block;
  padding-left: 26px;
  font-size: 21px;
  font-weight: 500;
  line-height: 24px;
}
.clock a {
  display: flex;
  align-items: center;
  gap: 6px;
  color: #fff;
  font-size: 15px;
  line-height: 30px;
  text-decoration: none;
}
.signals {
  display: flex;
  align-items: center;
  gap: 7px;
  height: 42px;
}
.contact {
  display: flex;
  align-items: center;
  height: 60px;
  padding: 0 22px 10px 27px;
}
.avatar {
  width: 44px;
  height: 44px;
  margin: 0 21px 0 28px;
}
.who {
  flex: 1;
  min-width: 0;
  padding-bottom: 5px;
}
.who h1 {
  color: #fff;
  font-size: 20px;
  line-height: 26px;
}
.who p {
  display: flex;
  align-items: center;
  gap: 4px;
  color: #8b8b8b;
  font-size: 16px;
  line-height: 26px;
  white-space: nowrap;
}
.contact > button + button {
  margin-left: 35px;
}

/* messages */
main {
  flex: 1;
  padding: 0 24px 20px 12px;
}
.new {
  display: flex;
  align-items: center;
  gap: 26px;
  padding: 0 3px 0 15px;
}
.new::before, .new::after {
  content: "";
  flex: 1;
  height: 1px;
  background: #2c2c2c;
}
.new, .day {
  color: #666;
  font-size: 14px;
  font-weight: 500;
  line-height: 22px;
}
.day {
  padding-left: 12px;
  text-align: center;
}
h2 {
  font-size: 16px;
  font-weight: 500;
  line-height: 20px;
}
h2.lina {
  color: var(--blue);
}
h2.eu {
  margin-top: 11px;
  color: var(--red);
}
.msgs {
  margin-top: 4px;
  padding-left: 9px;
  border-left: 3px solid var(--blue);
  border-radius: 1px;
}
.msgs p {
  font-size: 25px;
  line-height: 35px;
}
.msgs.lina {
  padding-bottom: 10px;
}
.msgs.eu {
  display: flex;
  margin-top: 5px;
  margin-right: -1px;
  padding: 11px 0 11px 10px;
  border-color: var(--red);
}
.msgs .emoji {
  flex: 1;
  min-width: 0;
}
.snap {
  display: flex;
  align-items: center;
  margin-top: 10px;
  padding: 10px 14px 10px 13px;
  border: 1px solid #222;
  border-radius: 6px;
}
.snap i {
  flex: none;
  width: 25px;
  height: 25px;
  border: 2px solid #f23c5c;
  border-radius: 6px;
}
.snap span {
  flex: 1;
  margin: 0 30px 0 11px;
  font-size: 18px;
  font-weight: 600;
  line-height: 27px;
}
.snap button {
  width: 44px;
  height: 44px;
  border-radius: 50%;
  background: #dedede;
  color: #121212;
}

/* composer */
.composer {
  display: flex;
  align-items: center;
  padding: 8px 18px 7px 10px;
  border-top: 1px solid #222;
}
.cam {
  width: 51px;
  height: 51px;
  border-radius: 50%;
  background: var(--panel);
  color: #e4e4e4;
}
.field {
  display: flex;
  align-items: center;
  flex: 1;
  min-width: 0;
  height: 56px;
  margin: 0 17px 0 9px;
  padding: 0 20px 0 18px;
  border-radius: 28px;
  background: var(--panel);
  font-size: 25px;
}
.field input::placeholder {
  color: #666;
  opacity: 1;
}
.caret {
  flex: none;
  width: 3px;
  height: 38px;
  background: var(--red);
}
.composer > button + button {
  margin-left: 23px;
}

/* emoji keyboard */
.keyboard {
  padding-top: 14px;
  background: var(--panel);
  font-family: Inter, sans-serif;
}
.search {
  display: flex;
  align-items: center;
  gap: 8px;
  height: 50px;
  margin: 0 11px;
  padding: 0 22px;
  border-radius: 14px;
  background: #444;
  font-size: 21px;
}
.search input::placeholder {
  color: #a3a3a3;
  opacity: 1;
}
.pages {
  display: flex;
  gap: 28px;
  padding-left: 7px;
  overflow: hidden;
}
.pages section {
  flex: none;
}
h3 {
  padding: 8px 0 0 12px;
  color: #a3a3a3;
  font-size: 17px;
  font-weight: 500;
  line-height: 24px;
}
.faces {
  width: 224px;
}
.faces h3 {
  padding-left: 10px;
  color: #8b8b8b;
  white-space: nowrap;
}
.grid {
  display: grid;
  grid-template-columns: repeat(6, 56px);
  grid-template-rows: repeat(5, 1fr);
  height: 268px;
}
.faces .grid {
  grid-template-columns: repeat(4, 56px);
}
.grid .emoji {
  width: 42px;
  height: 42px;
}
.emoji {
  overflow: visible;
}
.tabs {
  display: flex;
  align-items: center;
  justify-content: space-between;
  height: 62px;
  padding: 0 21px 0 20px;
}
.tabs button {
  width: 40px;
  height: 40px;
  fill: #747474;
}
.tabs svg {
  width: 22px;
  height: 22px;
}
.tabs .abc {
  color: #d4d4d4;
  font-size: 19px;
}
.tabs .on {
  margin-left: 14px;
  border-radius: 50%;
  background: #444;
}
.tabs .sym {
  flex-direction: column;
  color: #747474;
  font-size: 11px;
  line-height: 14px;
}
.tabs .jp {
  font-family: "Noto Sans CJK JP", sans-serif;
  font-size: 10px;
}
.tabs .del {
  width: 30px;
  margin-left: 22px;
}
.tabs .del svg {
  width: 30px;
  height: 26px;
}
.bottom {
  display: flex;
  justify-content: space-between;
  align-items: center;
  height: 86px;
  padding: 14px 48px 0 43px;
}
.home {
  width: 36%;
  height: 8px;
  margin: 0 auto 10px;
  border-radius: 4px;
  background: #fff;
}
```
